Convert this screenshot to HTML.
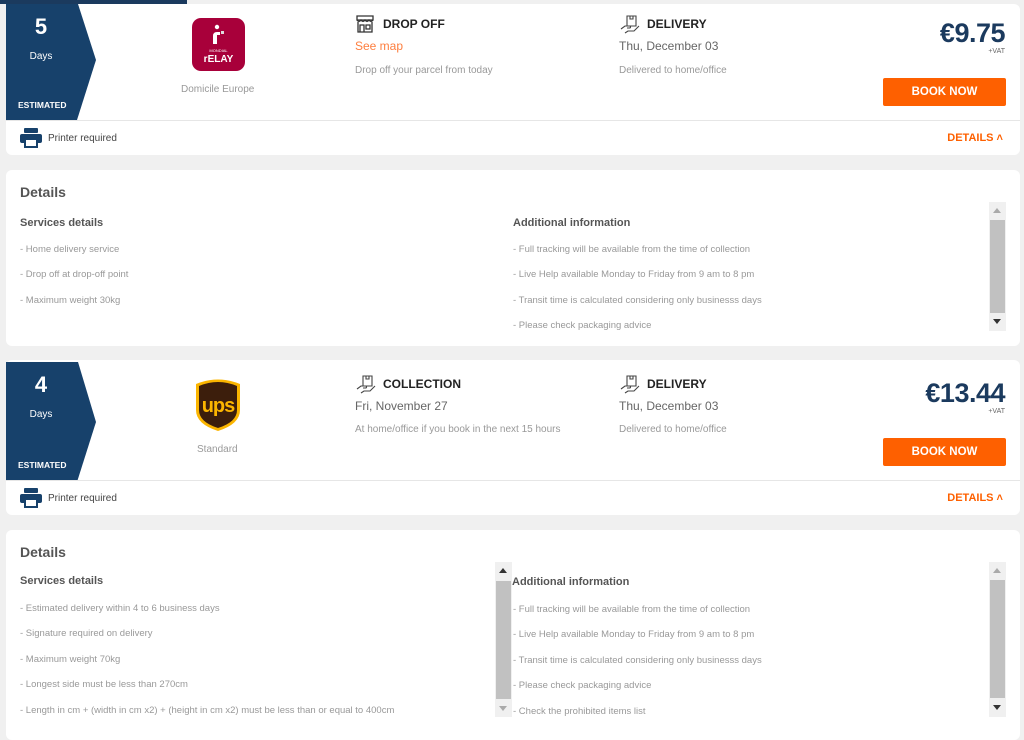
<!DOCTYPE html>
<html><head><meta charset="utf-8"><style>
*{margin:0;padding:0;box-sizing:border-box}
body{width:1024px;height:729px;background:#f0f0f0;font-family:"Liberation Sans",sans-serif;position:relative;overflow:hidden}
.a{position:absolute}
.card{position:absolute;left:6px;width:1014px;background:#fff;border-radius:6px}
.tab{position:absolute;left:0;top:0;width:92px;height:116px}
.t{position:absolute;white-space:nowrap}
.big{color:#fff;font-weight:bold;font-size:22px;left:0;width:70px;text-align:center}
.days{color:#fff;font-size:10px;left:0;width:70px;text-align:center}
.est{color:#fff;font-size:8.5px;font-weight:bold;left:12px}
.h{font-size:12px;font-weight:bold;color:#222}
.d{font-size:12px;color:#666}
.s{font-size:10px;color:#999}
.price{font-size:27px;font-weight:bold;color:#1b3a5e;right:15px;letter-spacing:-0.5px}
.vat{font-size:7px;color:#666;right:15px}
.btn{position:absolute;left:877px;width:123px;height:28px;background:#fe6000;color:#fff;font-weight:bold;font-size:11.5px;text-align:center;line-height:28px;border-radius:2px}
.sep{position:absolute;left:0;width:1014px;height:1px;background:#e6e6e6}
.pr{font-size:10px;color:#444}
.det{font-size:11px;color:#fe6000;font-weight:bold;right:17px}
.dt{font-size:14px;color:#555;font-weight:bold}
.sh{font-size:11px;color:#555;font-weight:bold}
.li{font-size:9.5px;color:#999}
.sb{position:absolute;width:17px;background:#f0f0f0}
.sb .th{position:absolute;left:1px;width:15px;background:#c1c1c1}
.sb .up,.sb .dn{position:absolute;left:4px;width:0;height:0;border-left:4px solid transparent;border-right:4px solid transparent}
</style></head><body>
<div class="a" style="left:0;top:0;width:187px;height:4px;background:#1b3a5e"></div>

<!-- card 1 -->
<div class="card" style="top:4px;height:151px">
 <svg class="tab" viewBox="0 0 92 116"><path d="M0 0H72L90 56L71 116H0Z" fill="#17416b"/></svg>
 <div class="t big" style="top:10px">5</div>
 <div class="t days" style="top:47px">Days</div>
 <div class="t est" style="top:96px">ESTIMATED</div>
 <svg class="a" style="left:186px;top:14px" width="53" height="53" viewBox="0 0 53 53"><rect x="0" y="0" width="53" height="53" rx="9" fill="#a8003a"/><circle cx="25" cy="9" r="2.2" fill="#fff"/><rect x="29" y="13" width="3" height="3" fill="#ddd"/><path d="M21 26V18q0-4 4-4h3v3h-3v9z" fill="#fff"/><text x="26.5" y="34" font-size="4" fill="#fff" text-anchor="middle" font-family="Liberation Sans">MONDIAL</text><text x="26.5" y="44" font-size="10" fill="#fff" font-weight="bold" text-anchor="middle" font-family="Liberation Sans">rELAY</text></svg>
 <div class="t s" style="left:175px;top:80px;font-size:10px;color:#999">Domicile Europe</div>
 <svg class="a" style="left:349px;top:10px" width="20" height="20" viewBox="0 0 20 20" fill="none" stroke="#333" stroke-width="1.3"><path d="M2 2h16v4H2zM2 6q2 3 4 0q2 3 4 0q2 3 4 0q2 3 4 0M3 8v10h14V8M5 18v-7h4v7M11 11h4v4h-4z"/></svg>
 <div class="t h" style="left:377px;top:13px">DROP OFF</div>
 <div class="t" style="left:349px;top:35px;font-size:12px;color:#fe7e3e">See map</div>
 <div class="t s" style="left:349px;top:61px">Drop off your parcel from today</div>
 <svg class="a" style="left:614px;top:10px" width="20" height="20" viewBox="0 0 20 20" fill="none" stroke="#444" stroke-width="1.1"><path d="M7 2h9v10H7zM10 2v3h3V2M1 15l4-3h5q1 1 0 2H7M5 19l3-2h6l5-5"/></svg>
 <div class="t h" style="left:641px;top:13px">DELIVERY</div>
 <div class="t d" style="left:613px;top:35px">Thu, December 03</div>
 <div class="t s" style="left:613px;top:61px">Delivered to home/office</div>
 <div class="t price" style="top:14px">€9.75</div>
 <div class="t vat" style="top:44px">+VAT</div>
 <div class="btn" style="top:74px">BOOK NOW</div>
 <div class="sep" style="top:116px"></div>
 <svg class="a" style="left:14px;top:124px" width="22" height="20" viewBox="0 0 22 20" fill="#17416b"><rect x="4" y="0" width="14" height="5" rx="1"/><rect x="0" y="6" width="22" height="9" rx="2"/><rect x="5" y="11" width="12" height="8" fill="#fff" stroke="#17416b" stroke-width="2"/></svg>
 <div class="t pr" style="left:42px;top:129px">Printer required</div>
 <div class="t det" style="top:128px">DETAILS ˄</div>
</div>

<!-- details 1 -->
<div class="card" style="top:170px;height:176px">
 <div class="t dt" style="left:14px;top:14px">Details</div>
 <div class="t sh" style="left:14px;top:47px">Services details</div>
 <div class="t li" style="left:14px;top:74px">- Home delivery service</div>
 <div class="t li" style="left:14px;top:99px">- Drop off at drop-off point</div>
 <div class="t li" style="left:14px;top:125px">- Maximum weight 30kg</div>
 <div class="t sh" style="left:507px;top:47px">Additional information</div>
 <div class="t li" style="left:507px;top:74px">- Full tracking will be available from the time of collection</div>
 <div class="t li" style="left:507px;top:99px">- Live Help available Monday to Friday from 9 am to 8 pm</div>
 <div class="t li" style="left:507px;top:125px">- Transit time is calculated considering only businesss days</div>
 <div class="t li" style="left:507px;top:150px">- Please check packaging advice</div>
 <div class="sb" style="left:983px;top:32px;height:129px"><div class="up" style="top:6px;border-bottom:5px solid #aaa"></div><div class="th" style="top:18px;height:93px"></div><div class="dn" style="top:117px;border-top:5px solid #333"></div></div>
</div>

<!-- card 2 -->
<div class="card" style="top:360px;height:155px">
 <svg class="tab" viewBox="0 0 92 116" style="height:120px"><path d="M0 0H72L90 60L71 120H0Z" fill="#17416b"/></svg>
 <div class="t big" style="top:12px">4</div>
 <div class="t days" style="top:49px">Days</div>
 <div class="t est" style="top:100px">ESTIMATED</div>
 <svg class="a" style="left:189px;top:18px" width="46" height="54" viewBox="0 0 46 54"><path d="M1 6Q23 -3 45 6V32Q45 46 23 53Q1 46 1 32Z" fill="#fbb500"/><path d="M4 8Q23 0 42 8V32Q42 44 23 50Q4 44 4 32Z" fill="#3c1e0c"/><text x="23" y="34" font-size="20" fill="#fbb500" font-weight="bold" text-anchor="middle" font-family="Liberation Sans" letter-spacing="-1">ups</text></svg>
 <div class="t s" style="left:191px;top:84px;font-size:10px">Standard</div>
 <svg class="a" style="left:350px;top:14px" width="20" height="20" viewBox="0 0 20 20" fill="none" stroke="#444" stroke-width="1.1"><path d="M7 2h9v10H7zM10 2v3h3V2M1 15l4-3h5q1 1 0 2H7M5 19l3-2h6l5-5"/></svg>
 <div class="t h" style="left:377px;top:17px">COLLECTION</div>
 <div class="t d" style="left:349px;top:39px">Fri, November 27</div>
 <div class="t s" style="left:349px;top:64px">At home/office if you book in the next 15 hours</div>
 <svg class="a" style="left:614px;top:14px" width="20" height="20" viewBox="0 0 20 20" fill="none" stroke="#444" stroke-width="1.1"><path d="M7 2h9v10H7zM10 2v3h3V2M1 15l4-3h5q1 1 0 2H7M5 19l3-2h6l5-5"/></svg>
 <div class="t h" style="left:641px;top:17px">DELIVERY</div>
 <div class="t d" style="left:613px;top:39px">Thu, December 03</div>
 <div class="t s" style="left:613px;top:64px">Delivered to home/office</div>
 <div class="t price" style="top:18px">€13.44</div>
 <div class="t vat" style="top:48px">+VAT</div>
 <div class="btn" style="top:78px">BOOK NOW</div>
 <div class="sep" style="top:120px"></div>
 <svg class="a" style="left:14px;top:128px" width="22" height="20" viewBox="0 0 22 20" fill="#17416b"><rect x="4" y="0" width="14" height="5" rx="1"/><rect x="0" y="6" width="22" height="9" rx="2"/><rect x="5" y="11" width="12" height="8" fill="#fff" stroke="#17416b" stroke-width="2"/></svg>
 <div class="t pr" style="left:42px;top:133px">Printer required</div>
 <div class="t det" style="top:132px">DETAILS ˄</div>
</div>

<!-- details 2 -->
<div class="card" style="top:530px;height:210px">
 <div class="t dt" style="left:14px;top:14px">Details</div>
 <div class="t sh" style="left:14px;top:45px">Services details</div>
 <div class="t li" style="left:14px;top:73px">- Estimated delivery within 4 to 6 business days</div>
 <div class="t li" style="left:14px;top:98px">- Signature required on delivery</div>
 <div class="t li" style="left:14px;top:124px">- Maximum weight 70kg</div>
 <div class="t li" style="left:14px;top:149px">- Longest side must be less than 270cm</div>
 <div class="t li" style="left:14px;top:175px">- Length in cm + (width in cm x2) + (height in cm x2) must be less than or equal to 400cm</div>
 <div class="sb" style="left:489px;top:32px;height:155px"><div class="up" style="top:6px;border-bottom:5px solid #333"></div><div class="th" style="top:19px;height:118px"></div><div class="dn" style="top:144px;border-top:5px solid #aaa"></div></div>
 <div class="t sh" style="left:506px;top:46px">Additional information</div>
 <div class="t li" style="left:507px;top:74px">- Full tracking will be available from the time of collection</div>
 <div class="t li" style="left:507px;top:99px">- Live Help available Monday to Friday from 9 am to 8 pm</div>
 <div class="t li" style="left:507px;top:125px">- Transit time is calculated considering only businesss days</div>
 <div class="t li" style="left:507px;top:150px">- Please check packaging advice</div>
 <div class="t li" style="left:507px;top:176px">- Check the prohibited items list</div>
 <div class="sb" style="left:983px;top:32px;height:155px"><div class="up" style="top:6px;border-bottom:5px solid #aaa"></div><div class="th" style="top:18px;height:118px"></div><div class="dn" style="top:143px;border-top:5px solid #333"></div></div>
</div>
</body></html>
